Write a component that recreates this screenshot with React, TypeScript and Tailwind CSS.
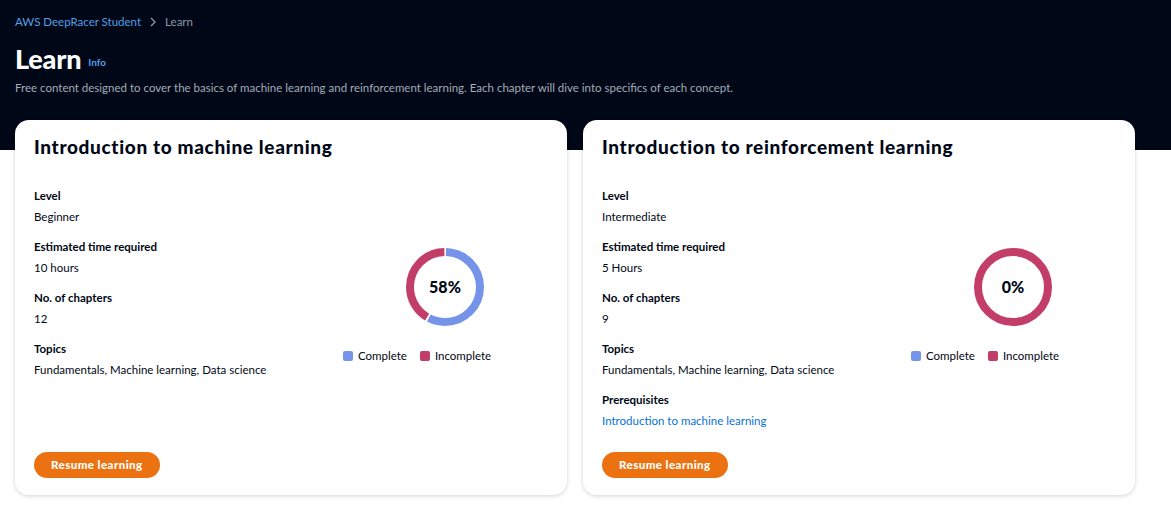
import React from 'react';

type Item = { label: string; value: string; link?: boolean };

type Course = {
  title: string;
  items: Item[];
  percent: number;
};

const courses: Course[] = [
  {
    title: 'Introduction to machine learning',
    percent: 58,
    items: [
      { label: 'Level', value: 'Beginner' },
      { label: 'Estimated time required', value: '10 hours' },
      { label: 'No. of chapters', value: '12' },
      { label: 'Topics', value: 'Fundamentals, Machine learning, Data science' },
    ],
  },
  {
    title: 'Introduction to reinforcement learning',
    percent: 0,
    items: [
      { label: 'Level', value: 'Intermediate' },
      { label: 'Estimated time required', value: '5 Hours' },
      { label: 'No. of chapters', value: '9' },
      { label: 'Topics', value: 'Fundamentals, Machine learning, Data science' },
      { label: 'Prerequisites', value: 'Introduction to machine learning', link: true },
    ],
  },
];

const BLUE = '#7593e8';
const PINK = '#c33d69';

const Donut: React.FC<{ percent: number }> = ({ percent }) => {
  const r = 35;
  const c = 2 * Math.PI * r;
  const gap = percent > 0 && percent < 100 ? 2 : 0;
  const done = (percent / 100) * c;
  return (
    <div className="relative w-[78px] h-[78px]">
      <svg width="78" height="78" viewBox="0 0 78 78" className="-rotate-90">
        {percent < 100 && (
          <circle
            cx="39"
            cy="39"
            r={r}
            fill="none"
            stroke={PINK}
            strokeWidth="8"
            strokeDasharray={`${c - done - gap} ${c}`}
            strokeDashoffset={-(done + gap / 2)}
          />
        )}
        {percent > 0 && (
          <circle
            cx="39"
            cy="39"
            r={r}
            fill="none"
            stroke={BLUE}
            strokeWidth="8"
            strokeDasharray={`${done - gap} ${c}`}
            strokeDashoffset={-gap / 2}
          />
        )}
      </svg>
      <div className="absolute inset-0 flex items-center justify-center text-[16px] font-black text-[#000716]">
        {percent}%
      </div>
    </div>
  );
};

const CourseCard: React.FC<{ course: Course }> = ({ course }) => {
  return (
    <div className="bg-white rounded-[14px] shadow-[0_1px_4px_rgba(0,7,22,0.18)] px-[19px] pt-[14px] pb-[17px] flex flex-col">
      <h2 className="text-[19px] leading-[26px] font-black tracking-[0.65px] text-[#000716]">{course.title}</h2>
      <div className="flex mt-[28px]">
        <div className="flex-1 flex flex-col gap-[14px]">
          {course.items.map((item) => (
            <div key={item.label} className="flex flex-col gap-[5px]">
              <div className="text-[11.5px] leading-[16px] font-bold text-[#000716]">{item.label}</div>
              <div
                className={
                  item.link
                    ? 'text-[11.5px] leading-[16px] text-[#0972d3]'
                    : 'text-[11.5px] leading-[16px] text-[#000716]'
                }
              >
                {item.value}
              </div>
            </div>
          ))}
        </div>
        <div className="w-[210px] pt-[60px] flex flex-col">
          <div className="flex justify-center pl-[4px]">
            <Donut percent={course.percent} />
          </div>
          <div className="flex items-center gap-[13px] mt-[21px] pl-[5px] text-[11.5px] text-[#000716]">
            <div className="flex items-center gap-[5px]">
              <span className="w-[10px] h-[10px] rounded-[2px] bg-[#7593e8]" />
              Complete
            </div>
            <div className="flex items-center gap-[5px]">
              <span className="w-[10px] h-[10px] rounded-[2px] bg-[#c33d69]" />
              Incomplete
            </div>
          </div>
        </div>
      </div>
      <div className="mt-auto pt-[22px]">
        <button className="h-[26px] px-[17px] rounded-full bg-[#ec7211] text-white text-[11.5px] font-black tracking-[0.45px]">
          Resume learning
        </button>
      </div>
    </div>
  );
};

export default function App() {
  return (
    <div className="min-h-[530px] bg-white font-['Lato',sans-serif] relative">
      <div className="bg-[#000716] pl-[15px] pr-[36px] pt-[14px]">
        <div className="flex items-center gap-[7px] text-[11.5px] leading-[16px]">
          <span className="text-[#539fe5]">AWS DeepRacer Student</span>
          <svg width="10" height="10" viewBox="0 0 10 10" className="text-[#8d99a8]">
            <path d="M3 1l4 4-4 4" fill="none" stroke="currentColor" strokeWidth="1.3" />
          </svg>
          <span className="text-[#8d99a8]">Learn</span>
        </div>
        <div className="flex items-end gap-[7px] mt-[13px]">
          <h1 className="text-[27px] leading-[32px] font-black text-white tracking-[-0.2px]">Learn</h1>
          <span className="text-[10px] font-bold text-[#539fe5] mb-[5px]">Info</span>
        </div>
        <p className="text-[11.5px] leading-[16px] text-[#a4adb9] mt-[5px]">
          Free content designed to cover the basics of machine learning and reinforcement learning. Each chapter will dive into specifics of each concept.
        </p>
        <div className="h-[24px]" />
      </div>
      <div className="relative">
        <div className="absolute inset-x-0 top-0 h-[30px] bg-[#000716]" />
        <div className="relative grid grid-cols-2 gap-[16px] pl-[15px] pr-[36px]">
          {courses.map((c) => (
            <CourseCard key={c.title} course={c} />
          ))}
        </div>
      </div>
    </div>
  );
}
